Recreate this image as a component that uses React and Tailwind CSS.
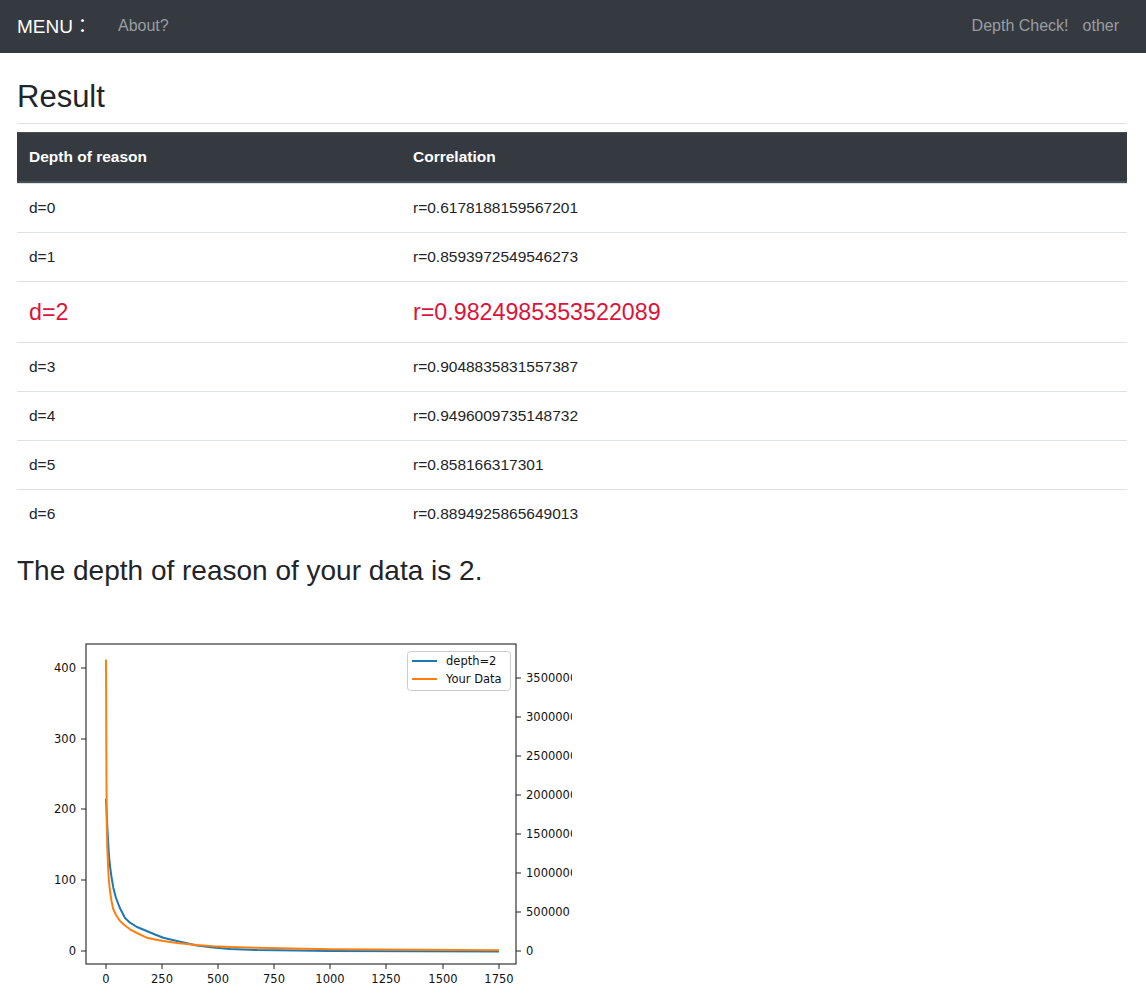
import React from 'react';

const rows = [
  { d: 'd=0', r: 'r=0.6178188159567201' },
  { d: 'd=1', r: 'r=0.8593972549546273' },
  { d: 'd=2', r: 'r=0.9824985353522089', best: true },
  { d: 'd=3', r: 'r=0.9048835831557387' },
  { d: 'd=4', r: 'r=0.9496009735148732' },
  { d: 'd=5', r: 'r=0.858166317301' },
  { d: 'd=6', r: 'r=0.8894925865649013' },
];

const bluePts = [
  [89, 205], [89.5, 215], [90.2, 230], [91, 245], [92, 262], [93, 272], [94.5, 283],
  [96.3, 293.7], [99, 304], [103, 314.3], [108, 324], [113, 328.7], [120, 333],
  [129.7, 337], [138, 340.5], [146.3, 343.7], [160, 347], [179.7, 351.5], [196, 353.5],
  [213, 355], [240, 356], [279.7, 356.5], [313, 357], [400, 357.2], [482, 357.4],
];

const orangePts = [
  [89, 65.5], [89.3, 150], [89.7, 227], [90.3, 255], [91.3, 277], [92, 288], [93, 297],
  [94.5, 307], [96.3, 315.3], [99, 321], [103, 327], [108, 331.5], [113, 335.3],
  [120, 339], [129.7, 343.7], [138, 345.5], [146.3, 347], [160, 349], [179.7, 351],
  [196, 352.2], [213, 353], [250, 354], [313, 355.3], [400, 355.8], [482, 356.2],
];

const leftTicks = [
  ['400', 74], ['300', 145], ['200', 215], ['100', 286], ['0', 357],
];

// the right axis labels run past the edge of the figure and get clipped, as in the original plot
const rightTicks = [
  ['3500000', 84], ['3000000', 123], ['2500000', 162], ['2000000', 201],
  ['1500000', 240], ['1000000', 279], ['500000', 318], ['0', 357],
];

const bottomTicks = [
  ['0', 89], ['250', 145], ['500', 201], ['750', 257], ['1000', 313],
  ['1250', 369], ['1500', 426], ['1750', 482],
];

const toPath = (pts) => pts.map((p, i) => `${i ? 'L' : 'M'}${p[0]} ${p[1]}`).join(' ');

const Chart = () => (
  <svg width="555" height="416" viewBox="0 0 555 416" className="block">
    <g style={{ fontFamily: "'DejaVu Sans', sans-serif", fontSize: '11.5px' }} fill="#111">
      {/* curves */}
      <path d={toPath(bluePts)} fill="none" stroke="#1f77b4" strokeWidth="2" strokeLinejoin="round" />
      <path d={toPath(orangePts)} fill="none" stroke="#ff7f0e" strokeWidth="2" strokeLinejoin="round" />

      {/* frame */}
      <rect x="69" y="50" width="430" height="320" fill="none" stroke="#222" strokeWidth="1.1" />

      {leftTicks.map(([t, y]) => (
        <g key={'l' + t}>
          <line x1="64" y1={y} x2="69" y2={y} stroke="#222" strokeWidth="1" />
          <text x="59" y={y + 4} textAnchor="end">{t}</text>
        </g>
      ))}
      {rightTicks.map(([t, y]) => (
        <g key={'r' + t}>
          <line x1="499" y1={y} x2="504" y2={y} stroke="#222" strokeWidth="1" />
          <text x="509" y={y + 4}>{t}</text>
        </g>
      ))}
      {bottomTicks.map(([t, x]) => (
        <g key={'b' + t}>
          <line x1={x} y1="370" x2={x} y2="375" stroke="#222" strokeWidth="1" />
          <text x={x} y="389" textAnchor="middle">{t}</text>
        </g>
      ))}

      {/* legend */}
      <rect x="390.5" y="57.5" width="103" height="39" rx="3" fill="#fff" fillOpacity="0.8" stroke="#cccccc" strokeWidth="1" />
      <line x1="395" y1="67" x2="420" y2="67" stroke="#1f77b4" strokeWidth="2" />
      <text x="429" y="71">depth=2</text>
      <line x1="395" y1="85" x2="420" y2="85" stroke="#ff7f0e" strokeWidth="2" />
      <text x="429" y="89">Your Data</text>
    </g>
  </svg>
);

export default function App() {
  return (
    <div className="min-h-screen bg-white text-[#212529] font-['Liberation_Sans',Arial,sans-serif]">
      {/* Navbar */}
      <nav className="h-[53px] bg-[#343a40] flex items-center pl-[17px] pr-[27px]">
        <span className="text-white text-[19px] leading-none -mt-[3px]">
          MENU<span className="font-['Noto_Sans_CJK_JP',sans-serif]">：</span>
        </span>
        <a className="ml-[26px] text-[16px] text-[#9a9da0] -mt-[2px]">About?</a>
        <div className="ml-auto flex items-center gap-[14px] text-[16px] text-[#9a9da0] -mt-[2px]">
          <a>Depth Check!</a>
          <a>other</a>
        </div>
      </nav>

      <div className="pl-[17px] pr-[19px]">
        <h2 className="mt-[25px] text-[31px] leading-[37px] font-medium pb-[8px] border-b border-[#dee2e6]">Result</h2>

        {/* Table */}
        <div className="mt-[8px] text-[15.5px]">
          <div className="grid grid-cols-[384px_1fr] bg-[#343a40] text-white font-bold border-t border-[#454d55] border-b-2">
            <div className="px-3 py-3 leading-6">Depth of reason</div>
            <div className="px-3 py-3 leading-6">Correlation</div>
          </div>
          {rows.map((row) => (
            <div
              key={row.d}
              className={`grid grid-cols-[384px_1fr] border-t border-[#dee2e6] ${
                row.best ? 'text-[23.25px] leading-9 text-[#dc143c]' : 'leading-6'
              }`}
            >
              <div className="px-3 py-3">{row.d}</div>
              <div className="px-3 py-3">{row.r}</div>
            </div>
          ))}
        </div>

        <h3 className="mt-4 text-[28px] leading-[34px] font-medium">The depth of reason of your data is 2.</h3>

        <div className="mt-[6px] h-[405px] overflow-hidden">
          <Chart />
        </div>
      </div>
    </div>
  );
}
